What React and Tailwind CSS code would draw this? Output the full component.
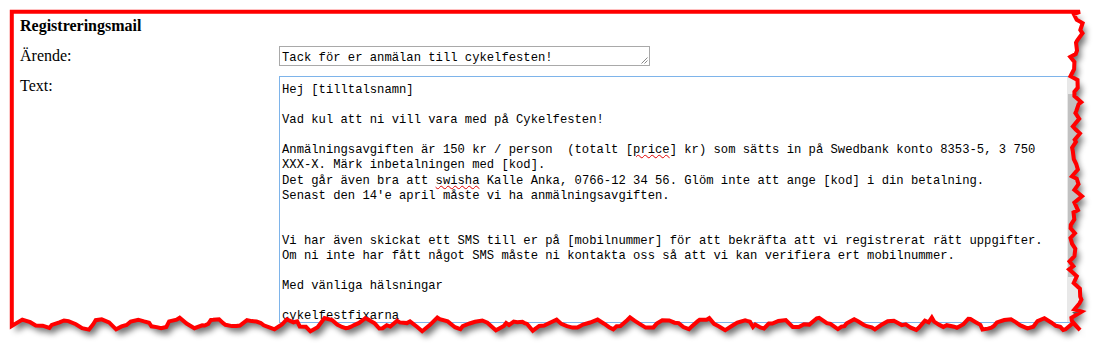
import React from 'react';

const lines = [
  'Hej [tilltalsnamn]',
  '',
  'Vad kul att ni vill vara med på Cykelfesten!',
  '',
  'PRICE',
  'XXX-X. Märk inbetalningen med [kod].',
  'SWISH',
  "Senast den 14'e april måste vi ha anmälningsavgiften.",
  '',
  '',
  'Vi har även skickat ett SMS till er på [mobilnummer] för att bekräfta att vi registrerat rätt uppgifter.',
  'Om ni inte har fått något SMS måste ni kontakta oss så att vi kan verifiera ert mobilnummer.',
  '',
  'Med vänliga hälsningar',
  '',
  'cykelfestfixarna',
];

// red squiggle like the browser spell checker
const Squiggle = ({ children }) => (
  <span className="underline decoration-wavy decoration-[#e00000] decoration-1 underline-offset-[1px]">{children}</span>
);

const renderLine = (line) => {
  if (line === 'PRICE') {
    return (
      <>
        {'Anmälningsavgiften är 150 kr / person  (totalt ['}
        <Squiggle>price</Squiggle>
        {'] kr) som sätts in på Swedbank konto 8353-5, 3 750'}
      </>
    );
  }
  if (line === 'SWISH') {
    return (
      <>
        {'Det går även bra att '}
        <Squiggle>swisha</Squiggle>
        {' Kalle Anka, 0766-12 34 56. Glöm inte att ange [kod] i din betalning.'}
      </>
    );
  }
  return line || ' ';
};

// seeded random so the torn edge is the same on every render
const seeded = (seed) => () => {
  seed = (seed + 0x6d2b79f5) | 0;
  let t = Math.imul(seed ^ (seed >>> 15), 1 | seed);
  t = (t + Math.imul(t ^ (t >>> 7), 61 | t)) ^ t;
  return ((t ^ (t >>> 14)) >>> 0) / 4294967296;
};

const tornPath = (() => {
  const r = seeded(23);
  const pts = [[11.75, 11.75], [1080, 11.75]];
  let y = 14;
  while (y < 322) {
    const x = 1075 + 3.5 * Math.sin(y / 15 + r()) + (r() - 0.5) * 10;
    pts.push([x, y]);
    y += 2 + r() * 6;
  }
  pts.push([1080, 330]);
  let x = 1073;
  while (x > 16) {
    const yy = 324 + 5 * Math.sin(x / 6 + r() * 0.6) * (0.5 + r() * 0.7) + (r() - 0.5) * 3.5;
    pts.push([x, yy]);
    x -= 2 + r() * 6;
  }
  pts.push([11.75, 326]);
  return 'M' + pts.map((p) => p[0].toFixed(1) + ' ' + p[1].toFixed(1)).join('L') + 'Z';
})();

const TornFrame = () => (
  <svg className="absolute inset-0 pointer-events-none" width="1102" height="349">
    <defs>
      <clipPath id="outside">
        <path d={'M0 0H1102V349H0Z' + tornPath} clipRule="evenodd" />
      </clipPath>
      <filter id="soft" x="-5%" y="-5%" width="110%" height="110%">
        <feGaussianBlur stdDeviation="3" />
      </filter>
    </defs>
    <g clipPath="url(#outside)">
      <rect width="1102" height="349" fill="#fff" />
      <path d={tornPath} transform="translate(4 6)" fill="#000" opacity="0.55" filter="url(#soft)" />
    </g>
    <path d={tornPath} fill="none" stroke="#ff0000" strokeWidth="4" strokeLinejoin="miter" />
  </svg>
);

export default function App() {
  return (
    <div className="relative w-[1102px] h-[349px] overflow-hidden bg-white text-black">
      <div className="pl-[20px] pt-[17px] font-['Liberation_Serif',serif] text-[16px]">
        <h3 className="font-bold leading-[18px]">Registreringsmail</h3>

        <div className="mt-[11px] flex">
          <div className="w-[259px] pt-[1px] leading-[18px]">Ärende:</div>
          <div className="relative w-[371px] h-[20px] border border-[#a9a9a9] overflow-hidden">
            <div className="pl-[2px] pt-[5px] font-['Liberation_Mono',monospace] text-[12.2px] leading-[13px] whitespace-pre">
              Tack för er anmälan till cykelfesten!
            </div>
            <svg className="absolute right-[1px] bottom-[1px]" width="7" height="7">
              <path d="M6.5 0.5L0.5 6.5M6.5 3.5L3.5 6.5" stroke="#888" strokeWidth="1" />
            </svg>
          </div>
        </div>

        <div className="mt-[10px] flex">
          <div className="w-[259px] pt-[1px] leading-[18px]">Text:</div>
          <div className="flex w-[806px] h-[247px] border border-[#7eb4ea]">
            <div className="flex-1 pl-[2px] pt-[6px] overflow-hidden font-['Liberation_Mono',monospace] text-[12.2px] leading-[15.1px] whitespace-pre">
              {lines.map((line, i) => (
                <div key={i}>{renderLine(line)}</div>
              ))}
            </div>
            <div className="w-[17px] flex flex-col bg-[#e8e8e8]">
              <div className="h-[17px]" />
              <div className="h-[183px] mx-[1px] bg-[#c1c1c1]" />
              <div className="flex-1" />
              <div className="h-[17px] flex items-center justify-center">
                <div className="w-0 h-0 border-l-[4px] border-r-[4px] border-t-[4px] border-l-transparent border-r-transparent border-t-[#606060]" />
              </div>
            </div>
          </div>
        </div>
      </div>
      <TornFrame />
    </div>
  );
}
